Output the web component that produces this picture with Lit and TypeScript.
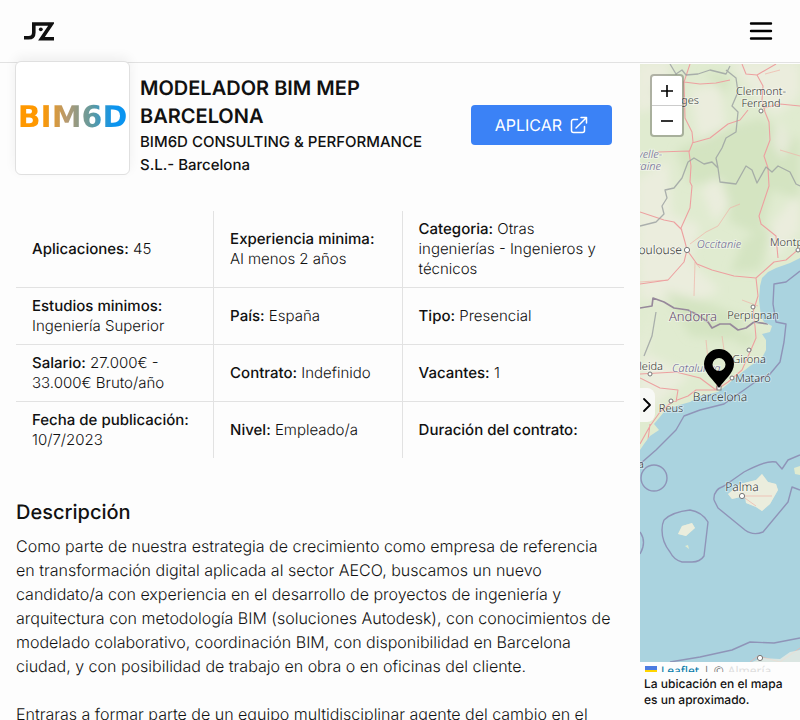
import { LitElement, html, svg, css } from "lit";
import { customElement } from "lit/decorators.js";

type Label = [x: number, y: number, text: string, kind: string];

const facts: [string, string][][] = [
  [["Aplicaciones:", "45"], ["Experiencia minima:", "Al menos 2 años"], ["Categoria:", "Otras ingenierías - Ingenieros y técnicos"]],
  [["Estudios minimos:", "Ingeniería Superior"], ["País:", "España"], ["Tipo:", "Presencial"]],
  [["Salario:", "27.000€ - 33.000€ Bruto/año"], ["Contrato:", "Indefinido"], ["Vacantes:", "1"]],
  [["Fecha de publicación:", "10/7/2023"], ["Nivel:", "Empleado/a"], ["Duración del contrato:", ""]],
];

const labels: Label[] = [
  [690, 104, "ges", "town mid"],
  [761, 95, "Clermont-", "town mid"],
  [761, 107, "Ferrand", "town mid"],
  [650, 158, "velle-", "region mid"],
  [649, 170, "taine", "region mid"],
  [682, 254, "oulouse", "city end"],
  [719, 248, "Occitanie", "region mid"],
  [770, 246, "Montpellier", "town"],
  [693, 321, "Andorra", "country mid"],
  [753, 319, "Perpignan", "town mid"],
  [749, 363, "Girona", "town mid"],
  [663, 370, "Lleida", "town end"],
  [672, 372, "Catalunya", "region"],
  [753, 382, "Mataró", "town mid"],
  [720, 401, "Barcelona", "city mid"],
  [671, 412, "Reus", "town mid"],
  [644, 468, "Castelló de la Plana", "town end"],
  [742, 491, "Palma", "city mid"],
];

@customElement("area-map")
class AreaMap extends LitElement {
  static styles = css`
    :host { display: block; position: relative; overflow: hidden; background: #aad3df; }
    .map { display: block; width: 100%; height: 100%; }
    .land { fill: #e0ebd0; }
    .forest { fill: #cbdfb8; opacity: 0.6; }
    .field { fill: #f0eee2; opacity: 0.7; }
    .road { fill: none; stroke: #eda0a0; stroke-width: 1.1; stroke-linejoin: round; }
    .minor { fill: none; stroke: #efb3a8; stroke-width: 0.7; }
    .border { fill: none; stroke: #9a9fa0; stroke-width: 1.3; stroke-linejoin: round; opacity: 0.8; }
    .nation { fill: none; stroke: #97899b; stroke-width: 1.7; stroke-linejoin: round; }
    .sea { fill: none; stroke: #8f94b8; stroke-width: 1.4; stroke-linejoin: round; }
    .dot { fill: #fff; stroke: #777; stroke-width: 1; }
    .label { font-family: "Noto Sans", sans-serif; fill: #333; stroke: rgba(255, 255, 255, 0.4); stroke-width: 2; paint-order: stroke; }
    .town { font-size: 11px; }
    .city { font-size: 12px; }
    .country { font-size: 13px; fill: #65496e; }
    .region { font-size: 11px; font-style: italic; fill: #6a6492; }
    .mid { text-anchor: middle; }
    .end { text-anchor: end; }
    .zoom { position: absolute; top: 10px; left: 10px; display: flex; flex-direction: column; width: 30px; border: 2px solid rgba(0, 0, 0, 0.25); border-radius: 4px; background: #fff; background-clip: padding-box; }
    .step { display: grid; place-items: center; height: 29px; box-sizing: content-box; padding: 0; border: 0; background: none; color: #000; }
    .step + .step { border-top: 1px solid #ccc; }
    .sign { width: 14px; height: 14px; fill: none; stroke: #000; stroke-width: 1.6; }
    .fold { position: absolute; top: 324px; left: 0; width: 15px; height: 34px; padding: 0; border: 0; border-radius: 0 8px 8px 0; background: rgba(250, 250, 250, 0.85); }
    .chevron { display: block; width: 14px; height: 16px; fill: none; stroke: #000; stroke-width: 1.8; stroke-linecap: round; stroke-linejoin: round; }
  `;

  render() {
    return html`
      <svg class="map" viewBox="640 64 160 598" preserveAspectRatio="xMinYMin slice" role="img" aria-label="Mapa de Barcelona">
        <defs>
          <filter id="soft" x="-10%" y="-10%" width="120%" height="120%"><feGaussianBlur stdDeviation="5" /></filter>
          <clipPath id="coast"><path d=${this.mainland} /></clipPath>
        </defs>
        <path class="land" d=${this.mainland} />
        <g clip-path="url(#coast)">
          <g filter="url(#soft)">
            <path class="field" d="M636 62H672L664 92 650 110 636 112ZM636 180 668 160 672 215 700 225 690 262 720 290 700 300 640 300ZM730 62H800V96L776 116 758 100ZM655 300 640 350 690 376 650 410 636 400ZM690 90 720 84 726 130 700 146ZM770 226 800 190V230L772 262Z" />
            <path class="forest" d="M676 150 720 130 760 118 800 140V200L772 190 760 236 730 222 724 180 690 184ZM744 240 772 226 760 270 730 272ZM664 290 700 300 748 318 730 340 690 336ZM720 328 760 334 745 348ZM650 90 680 82 682 120ZM704 72 730 76 726 96Z" />
            <path class="field" d="M702 190 716 176 730 204 714 222ZM778 120 792 140 782 160 772 142Z" />
          </g>
          <path class="minor" d="M690 244 706 232 718 226 730 208 740 204M640 282 668 280M694 296 695 262 700 268M709 370 706 340M724 350 722 336M742 300 758 306M780 150 800 156M765 74 780 70" />
          <path class="road" d="M690 64 684 82 685 118 692 132 693 142 689 152 691 166 690 182 692 186 690 208 681 228 685 242 687 250M684 82 700 84 716 83 730 80M742 64 746 74 757 75 763 86 762 100 765 112 769 122 770 140 764 156 768 168 769 186 759 216 761 224 776 236 778 258M757 75 776 64M764 108 780 104 800 106M748 110 740 120 728 124 710 138 692 143M658 152 689 151M687 250 684 262 668 280 640 284M640 212 664 220 674 222 682 230M687 250 697 264 712 270 734 276 756 278M756 278 758 296 753 312 755 326 756 338 750 352 742 370 728 382 716 390 696 390 688 396 672 402 660 412 650 426 640 444M756 278 774 262 786 260 800 248M640 374 676 372 700 378 716 390M640 378 660 388 678 390 676 402M650 424 648 440 640 454M716 390 718 380 728 370" />
          <path class="border" d="M670 64 676 74 682 70 686 75 698 74 710 70 726 74 730 66M726 70 736 78 738 92 732 106 738 112 736 132 726 138 722 148 716 158 718 168 712 162 704 164 694 158 688 162 682 178 674 188 665 190 667 198 662 206 664 214 656 222 640 226M718 168 720 182 736 184 746 166 752 170 757 183 766 167 772 172 778 166 790 172 796 184 800 186M656 312 652 336 644 356" />
          <path class="nation" d="M640 308 652 306 653 298 664 302 674 308 688 310 696 314 708 322 712 328 720 324 730 324 738 330 746 328 754 322 768 324" />
        </g>
        <path class="sea" d="M800 271 786 282 774 284 773 304 776 322 786 324 784 342 780 362 770 374 758 380 744 390 724 404 700 410 684 416 676 430 656 450 640 464M654 465A13 13 0 0 1 654 491A13 13 0 0 1 654 465M714 500Q713 490 724 486L744 472Q766 460 776 462L782 469 788 460 800 455M714 500 718 508 745 530Q753 536 763 532L788 502 792 487 800 490M664 520Q672 512 690 510 702 512 708 522L704 556Q700 562 692 562L682 562Q674 560 670 552 662 542 662 530 662 524 664 520M640 532Q647 542 640 554M670 662 700 657 732 650 750 642 774 643 800 638" />
        <path class="land" d="M728 494 740 484 756 480 762 474 768 482 776 484 778 490 770 504 762 511 756 507 746 503 745 496 732 499ZM678 534 682 526 692 523 695 528 686 536ZM685 546 688 545 689 549ZM794 468 800 466V475L795 474Z" />
        <path class="field" d="M728 494 740 484 756 480 762 474 768 482 776 484 778 490 770 504 762 511 756 507 746 503 745 496 732 499ZM678 534 682 526 692 523 695 528 686 536Z" />
        <path class="minor" d="M742 496 772 496M742 496 756 506M750 662 758 656 780 662 800 648" />
        <path class="field" d="M752 662 762 658 780 659 790 652 800 650V662Z" />
        <circle class="dot" cx="687" cy="250" r="2.6" /><circle class="dot" cx="761" cy="111" r="2" />
        <circle class="dot" cx="753" cy="307" r="2" /><circle class="dot" cx="749" cy="350" r="2" />
        <circle class="dot" cx="650" cy="374" r="2" /><circle class="dot" cx="671" cy="401" r="2" />
        <circle class="dot" cx="742" cy="496" r="2.6" /><circle class="dot" cx="798" cy="250" r="2" />
        <circle class="dot" cx="760" cy="658" r="2.6" /><circle class="dot" cx="732" cy="378" r="2" />
        <rect class="dot" x="717" y="386" width="4" height="4" />
        ${labels.map(([x, y, text, kind]) => svg`<text class="label ${kind}" x=${x} y=${y}>${text}</text>`)}
        <path fill="#000" fill-rule="evenodd" d="M719 388C714 380 704 373 704 364A15 15 0 0 1 734 364C734 373 724 380 719 388ZM719 358A6.5 6.5 0 1 0 719 371 6.5 6.5 0 1 0 719 358Z" />
      </svg>
      <div class="zoom">
        <button class="step" aria-label="Acercar"><svg class="sign" viewBox="0 0 14 14"><path d="M1 7H13M7 1V13" /></svg></button>
        <button class="step" aria-label="Alejar"><svg class="sign" viewBox="0 0 14 14"><path d="M1 7H13" /></svg></button>
      </div>
      <button class="fold" aria-label="Plegar mapa"><svg class="chevron" viewBox="0 0 14 16"><path d="M4 2L10 8L4 14" /></svg></button>
    `;
  }

  private mainland =
    "M630 54H810V252L800 258 790 263 776 268 768 272 762 278 760 286 759 300 761 316 764 322 772 326 770 332 762 334 766 340 766 350 762 358 750 366 740 374 728 384 718 392 700 396 690 402 676 406 664 412 654 424 659 430 650 436 644 444 636 456Z";
}

@customElement("app-root")
class AppRoot extends LitElement {
  static styles = css`
    :host { display: flex; flex-direction: column; height: 100vh; overflow: hidden; background: #fdfdfd; color: #111; font-family: Inter, sans-serif; font-size: 16px; font-weight: 350; text-rendering: geometricPrecision; }
    h1, h2, p { margin: 0; }
    .bar { display: flex; flex: none; align-items: center; justify-content: space-between; height: 62px; padding: 0 27px 0 24px; border-bottom: 1px solid #e2e2e2; }
    .brand { display: block; width: 30px; height: 19px; }
    .menu { padding: 0; border: 0; background: none; }
    .lines { display: block; width: 24px; height: 20px; stroke: #000; stroke-width: 2.4; stroke-linecap: round; }
    .page { display: grid; grid-template-columns: 4fr 1fr; grid-template-rows: minmax(0, 1fr); flex: 1; min-height: 0; }
    .offer { min-width: 0; padding: 0 16px; }
    .head { display: flex; align-items: center; gap: 10px; min-height: 124px; padding-right: 12px; }
    .card { display: grid; flex: none; align-self: flex-start; place-items: center; width: 113px; height: 112px; margin: -2px 0 0 -1px; border: 1px solid #e0e0e0; border-radius: 6px; background: #fff; box-shadow: 0 -4px 12px rgba(0, 0, 0, 0.06); }
    .logo { background: linear-gradient(90deg, #ff9800 22%, #b59a72 45%, #5f9aa0 68%, #0a94f0 88%); background-clip: text; -webkit-background-clip: text; color: transparent; font: 700 30px/36px "DejaVu Sans", sans-serif; }
    .names { flex: 1; padding-right: 16px; }
    .title { font-size: 20px; line-height: 28px; font-weight: 600; }
    .firm { font-size: 15px; line-height: 23px; font-weight: 500; }
    .apply { display: flex; flex: none; align-items: center; gap: 8px; height: 40px; padding: 0 24px; border-radius: 4px; background: #3b82f6; color: #fff; font-weight: 400; text-decoration: none; }
    .out { width: 18px; height: 18px; fill: none; stroke: #fff; stroke-width: 1.5; stroke-linecap: round; stroke-linejoin: round; }
    .facts { width: 100%; margin-top: 24px; border-collapse: collapse; table-layout: fixed; font-size: 15px; line-height: 20px; }
    .first { width: 32.5%; }
    .second { width: 31%; }
    .fact { padding: 8px 16px; text-align: left; }
    .fact + .fact { border-left: 1px solid #e2e2e2; }
    .row + .row { border-top: 1px solid #e2e2e2; }
    .key { font-weight: 500; }
    .subtitle { margin-top: 40px; font-size: 20px; line-height: 28px; font-weight: 500; }
    .text { margin-top: 8px; padding-right: 4px; line-height: 24px; }
    .text + .text { margin-top: 24px; }
    .side { display: flex; flex-direction: column; min-width: 0; min-height: 0; padding-top: 1px; }
    .map { flex: 1; min-height: 0; }
    .credit { display: flex; flex: none; gap: 4px; height: 10px; padding-left: 5px; overflow: hidden; font: 12px/18px "Noto Sans", sans-serif; white-space: nowrap; color: #777; }
    .flag { flex: none; width: 12px; height: 8px; margin-top: 4px; }
    .link { color: #0078a8; text-decoration: none; }
    .faint { color: #ddd; }
    .note { flex: none; height: 44px; padding: 4px 4px 0; font-size: 12px; line-height: 16px; font-weight: 500; }
  `;

  render() {
    return html`
      <header class="bar">
        <a href="#" aria-label="Inicio">
          <svg class="brand" viewBox="0 0 30 19">
            <path d="M0 15.8H4.5Q9.8 15.8 9.8 10.5V2H27.5L17.5 16.8H30" fill="none" stroke="#111" stroke-width="3.6" />
            <circle cx="16.8" cy="7.3" r="1.9" fill="#111" />
          </svg>
        </a>
        <button class="menu" aria-label="Menú"><svg class="lines" viewBox="0 0 24 20"><path d="M2 2.5H22M2 10H22M2 17.5H22" /></svg></button>
      </header>
      <main class="page">
        <article class="offer">
          <div class="head">
            <div class="card"><span class="logo">BIM6D</span></div>
            <div class="names">
              <h1 class="title">MODELADOR BIM MEP BARCELONA</h1>
              <p class="firm">BIM6D CONSULTING &amp; PERFORMANCE S.L.- Barcelona</p>
            </div>
            <a class="apply" href="#">APLICAR
              <svg class="out" viewBox="0 0 18 18"><path d="M7.5 3.5H3.5A2 2 0 0 0 1.5 5.5V14.5A2 2 0 0 0 3.5 16.5H12.5A2 2 0 0 0 14.5 14.5V10.5M6 12L16.5 1.5M11 1.5H16.5V7" /></svg>
            </a>
          </div>
          <table class="facts">
            <colgroup><col class="first" /><col class="second" /><col /></colgroup>
            <tbody>
              ${facts.map((row) => html`<tr class="row">${row.map(([key, value]) => html`<td class="fact"><span class="key">${key}</span> ${value}</td>`)}</tr>`)}
            </tbody>
          </table>
          <h2 class="subtitle">Descripción</h2>
          <p class="text">Como parte de nuestra estrategia de crecimiento como empresa de referencia en transformación digital aplicada al sector AECO, buscamos un nuevo candidato/a con experiencia en el desarrollo de proyectos de ingeniería y arquitectura con metodología BIM (soluciones Autodesk), con conocimientos de modelado colaborativo, coordinación BIM, con disponibilidad en Barcelona ciudad, y con posibilidad de trabajo en obra o en oficinas del cliente.</p>
          <p class="text">Entraras a formar parte de un equipo multidisciplinar agente del cambio en el</p>
        </article>
        <aside class="side">
          <area-map class="map"></area-map>
          <div class="credit">
            <svg class="flag" viewBox="0 0 12 8"><path fill="#4c7be1" d="M0 0H12V4H0z" /><path fill="#ffd500" d="M0 4H12V6H0z" /><path fill="#e0bc00" d="M0 6H12V8H0z" /></svg>
            <a class="link" href="#">Leaflet</a><span>|</span><span>©</span><span class="faint">Almería</span>
          </div>
          <p class="note">La ubicación en el mapa es un aproximado.</p>
        </aside>
      </main>
    `;
  }
}
